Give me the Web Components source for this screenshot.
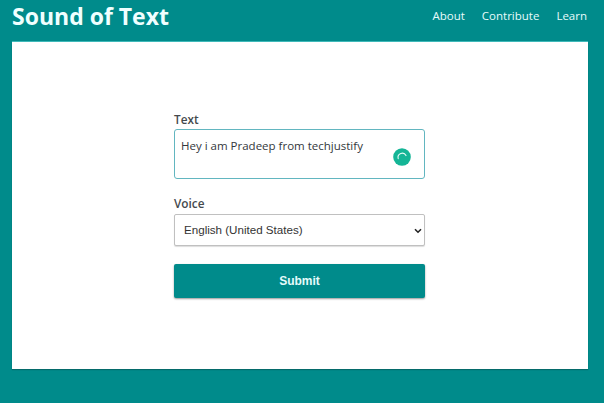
<!DOCTYPE html>
<html lang="en">
<head>
<meta charset="utf-8">
<title>Sound of Text</title>
<style>
html,body{margin:0;padding:0;height:100%;background:#008b8b;overflow:hidden}
body{font-family:"Open Sans",sans-serif}
</style>
</head>
<body>
<sot-app>
  <sot-header slot="header"></sot-header>
  <sot-card>
    <sot-field label="Text"><sot-textbox>Hey i am Pradeep from techjustify</sot-textbox></sot-field>
    <sot-field label="Voice"><sot-select></sot-select></sot-field>
    <sot-button>Submit</sot-button>
  </sot-card>
</sot-app>
<script>
function def(name, html, init){
  customElements.define(name, class extends HTMLElement{
    constructor(){super();this.attachShadow({mode:'open'}).innerHTML=html;}
    connectedCallback(){ if(init) init(this); }
  });
}
def('sot-app',`<style>
:host{display:flex;flex-direction:column;width:604px;height:403px;padding:0 16px 34px 12px;box-sizing:border-box;background:#008b8b}
</style><slot name="header"></slot><slot></slot>`);
def('sot-header',`<style>
:host{display:flex;justify-content:space-between;align-items:flex-start;height:42px;flex:none;color:#f0ffff}
.t{font:700 23px/32px "Open Sans",sans-serif}
nav{display:flex;gap:17px;padding:7px 1px 0 0;font:400 11.5px/18px "Open Sans",sans-serif;color:#e6fbfb}
</style><div class="t">Sound of Text</div><nav><span>About</span><span>Contribute</span><span>Learn</span></nav>`);
def('sot-card',`<style>
:host{display:block;flex:1;background:#fff;box-shadow:0 -1px 0 #3fb9b9,0 1px 1px #056a6a;padding:69px 163px 0 162px;box-sizing:border-box}
</style><slot></slot>`);
def('sot-field',`<style>
:host{display:block;margin-bottom:16px}
label{display:block;font:600 11.8px/17px "Open Sans",sans-serif;color:#454a4e;margin-bottom:1px}
:host([label="Voice"]) label{margin-bottom:2px}
</style><label></label><slot></slot>`, el=>{el.shadowRoot.querySelector('label').textContent=el.getAttribute('label');});
def('sot-textbox',`<style>
:host{display:block;position:relative;height:50px;box-sizing:border-box;border:1.5px solid #62b6c0;border-radius:3px;padding:7px 6px;font:400 11.5px/17px "Open Sans",sans-serif;color:#33383c;background:#fff}
svg{position:absolute;right:13px;top:17.5px}
</style><slot></slot><svg width="18" height="18" viewBox="0 0 18 18" aria-hidden="true"><circle cx="9" cy="9" r="8.8" fill="#14b596"/><path d="M5.2 10.6A4.2 4.2 0 0 1 13 7.6" fill="none" stroke="#e8fbf6" stroke-width="1.1" stroke-linecap="round"/></svg>`);
def('sot-select',`<style>
:host{display:block;position:relative}
select{display:block;width:100%;height:32px;box-sizing:border-box;appearance:none;background:#fff;border:1px solid #c0c0c0;border-radius:2px;padding:0 9px 2px;font:400 11.6px "Liberation Sans",Arial,sans-serif;color:#333;box-shadow:0 1px 1px #ddd;outline:0}
svg{position:absolute;right:3px;top:14px;pointer-events:none}
</style><select><option>English (United States)</option></select><svg width="8" height="6" viewBox="0 0 8 6" aria-hidden="true"><path d="M1 1.2 4 4.2 7 1.2" fill="none" stroke="#222" stroke-width="1.6"/></svg>`);
def('sot-button',`<style>
:host{display:flex;align-items:center;justify-content:center;height:34px;margin-top:18px;background:#008b8b;border-radius:2px;color:#e6fbfb;font:700 12px "Liberation Sans",Arial,sans-serif;box-shadow:0 1px 2px #9a9a9a}
</style><slot></slot>`);
</script>
</body>
</html>
